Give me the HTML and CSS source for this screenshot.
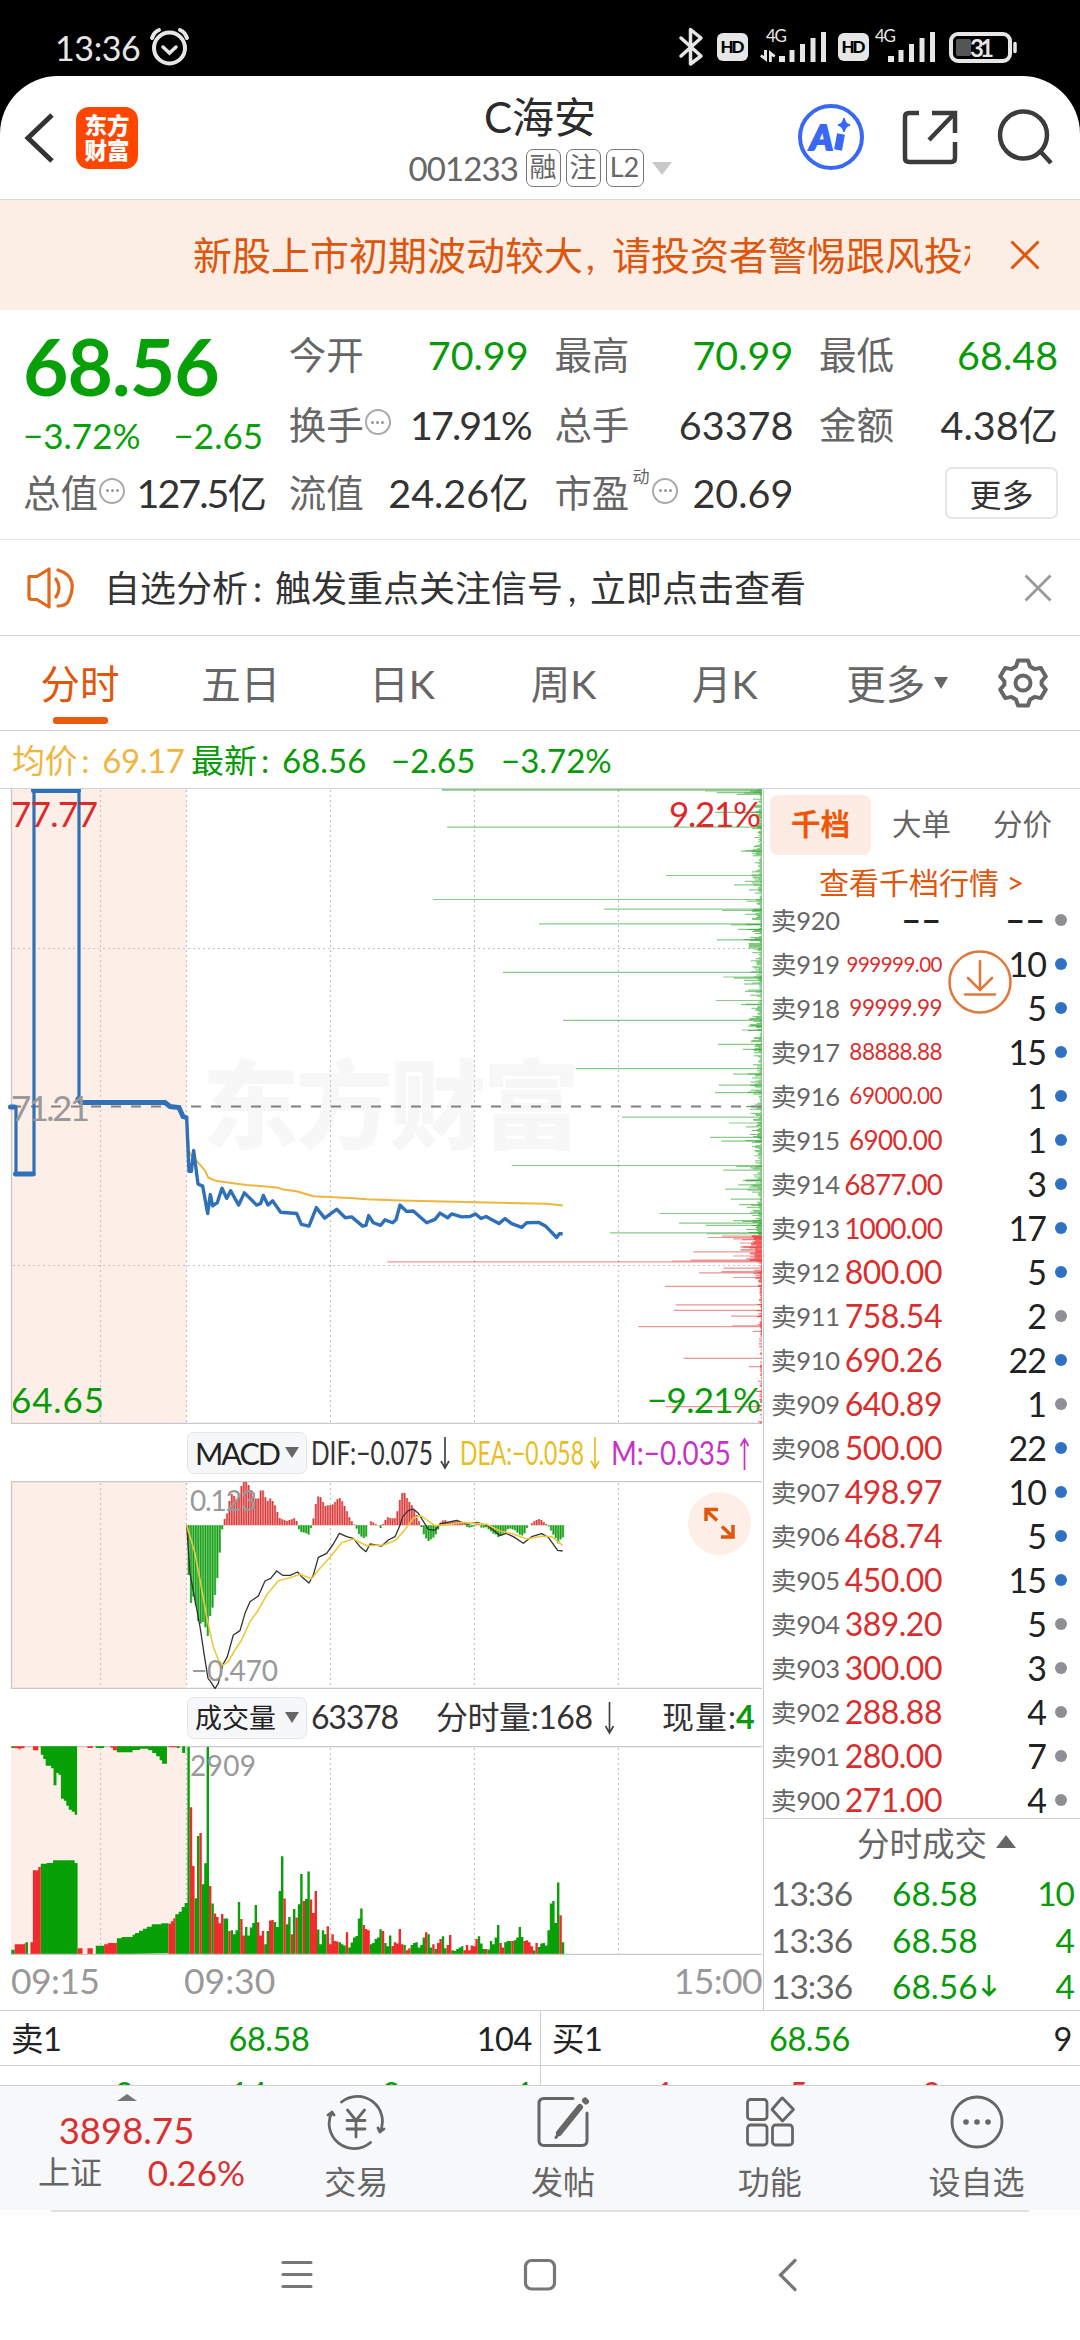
FILE: index.html
```html
<!DOCTYPE html>
<html lang="zh-CN">
<head>
<meta charset="utf-8">
<title>C海安 001233</title>
<link rel="stylesheet" href="styles.css">
</head>
<body>
<div class="phone">
  <div class="statusbar">
    <span class="clock">13:36</span>
    <svg class="status-icons" viewBox="142 0 938 76" width="938" height="76">
      <g fill="none" stroke="#e6e6e6" stroke-width="4" stroke-linecap="round">
        <circle cx="169.500" cy="48" r="15.500"/>
        <path d="M163 47l6.500 6 6.500-6" stroke-width="3.500"/>
        <path d="M152 38q2-6 7-8M187 38q-2-6-7-8" stroke-width="4"/>
        <path d="M681 38l20 18-10.500 8V29.500l10.500 8.500-20 18" stroke-width="3.500" stroke-linejoin="round"/>
        <rect x="951" y="34" width="59" height="27" rx="7"/>
        <path d="M1015 43.500v8" stroke-width="3.500"/>
      </g>
      <rect x="956" y="39" width="15" height="17" rx="2" fill="#555"/>
      <g fill="#e6e6e6">
        <rect x="717" y="33" width="31" height="28" rx="6"/>
        <rect x="838" y="33" width="31" height="28" rx="6"/>
        <path d="M779 56h6v6h-6zM789.500 50h5v12h-5zM800 44h5v18h-5zM810.500 38h5v24h-5zM821 32h5v30h-5z"/>
        <path d="M888 56h6v6h-6zM898.500 50h5v12h-5zM909 44h5v18h-5zM919.500 38h5v24h-5zM930 32h5v30h-5z"/>
        <path d="M764 50h3v12l-7-5.500 1.500-2 2.500 1.500zM769 62V50l6.500 5.500-1.500 2-2.200-1.500v6z"/>
        <text x="766" y="42" font-size="17" textLength="21">4G</text>
        <text x="875" y="42" font-size="17" textLength="21">4G</text>
        <text x="970" y="56.500" font-size="24" font-weight="700" textLength="24">31</text>
      </g>
      <g fill="#000" font-size="17" font-weight="900">
        <text x="720.500" y="53" textLength="24">HD</text>
        <text x="841.500" y="53" textLength="24">HD</text>
      </g>
    </svg>
  </div>

  <div class="screen">
    <header class="header">
      <div class="head-left">
        <svg width="30" height="54" viewBox="0 0 30 54" fill="none" stroke="#333" stroke-width="5"><path d="M28 4L4 27l24 23"/></svg>
        <div class="logo"><span>东方</span><span>财富</span></div>
      </div>
      <div class="head-title">
        <h1>C海安</h1>
        <div class="code"><span class="num">001233</span><i>融</i><i>注</i><i class="wide">L2</i><b></b></div>
      </div>
      <svg class="head-right" viewBox="790 77 290 122" width="290" height="122" fill="none" stroke="#3c3c3c" stroke-width="4.500">
        <circle cx="831" cy="138" r="31" stroke="#3a68f5" stroke-width="4"/>
        <text x="810" y="151" class="ai-text">A</text>
        <path d="M841 135l-3 16" stroke="#3a68f5" stroke-width="8"/>
        <path d="M844 119q1 6 6 7-5 1-6 7-1-6-6-7 5-1 6-7z" fill="#3a68f5" stroke="#3a68f5" stroke-width="1.500"/>
        <path d="M919 114h-10q-4 0-4 4v41q0 4 4 4h42q4 0 4-4v-16"/>
        <path d="M932 114h23v20M954 115l-25 26"/>
        <circle cx="1023.500" cy="136" r="23.500"/><path d="M1039 151l12 13"/>
      </svg>
    </header>

    <div class="banner">
      <p>新股上市初期波动较大<em>,</em>请投资者警惕跟风投机</p>
      <svg width="30" height="30" viewBox="0 0 30 30" fill="none" stroke="#e0570c" stroke-width="3"><path d="M1.500 1.500l27 27M28.500 1.500l-27 27"/></svg>
    </div>

    <section class="stats">
      <div class="price"><strong>68.56</strong><p><span>−3.72%</span><span>−2.65</span></p></div>
      <div class="cell"><label>今开</label><span class="down">70.99</span></div>
      <div class="cell"><label>最高</label><span class="down">70.99</span></div>
      <div class="cell"><label>最低</label><span class="down">68.48</span></div>
      <div class="cell"><label>换手</label><u><s></s></u><span class="tight">17.91%</span></div>
      <div class="cell"><label>总手</label><span>63378</span></div>
      <div class="cell"><label>金额</label><span>4.38亿</span></div>
      <div class="cell"><label>总值</label><u><s></s></u><span class="tight">127.5亿</span></div>
      <div class="cell"><label>流值</label><span>24.26亿</span></div>
      <div class="cell"><label>市盈</label><sup>动</sup><u><s></s></u><span>20.69</span></div>
      <div class="cell"><button>更多</button></div>
    </section>

    <div class="notice">
      <svg width="48" height="42" viewBox="0 0 48 42" fill="none" stroke="#e0691e" stroke-width="3.200" stroke-linejoin="round"><path d="M2 9.500h8L22 2v38L10 32.500H5q-3 0-3-3z"/><path d="M29 12q6 9 0 18M31 3q22 7 10 32-3 4-10 4" stroke-linecap="round"/></svg>
      <p>自选分析<em>:</em>触发重点关注信号<em>,</em>立即点击查看</p>
      <svg width="28" height="28" viewBox="0 0 28 28" fill="none" stroke="#999" stroke-width="2.800"><path d="M1.500 1.500l25 25M26.500 1.500l-25 25"/></svg>
    </div>

    <nav class="tabs">
      <a class="on">分时</a><a>五日</a><a>日K</a><a>周K</a><a>月K</a><a class="more">更多<b></b></a>
      <svg width="50" height="50" viewBox="-25 -25 50 50" fill="none" stroke="#666" stroke-width="4" stroke-linejoin="round"><path d="M-5-22.500h10l2 6 4.500 2.600 6.300-1.200 5 8.600-4.200 4.800v3.400l4.200 4.800-5 8.600-6.300-1.200L7 16.500l-2 6H-5l-2-6-4.500-2.600-6.300 1.200-5-8.600 4.200-4.800V-1.700l-4.200-4.800 5-8.600 6.300 1.200L-7-16.500z"/><circle r="7.500"/></svg>
    </nav>

    <div class="legend"><span class="avg">均价<em>:</em>69.17</span><span class="down">最新<em>:</em>68.56</span><span class="down">−2.65</span><span class="down">−3.72%</span></div>

    <main class="board">
      <div class="charts">
        <svg class="panel" viewBox="0 789 763 635" width="763" height="635">
          <rect x="11" y="789" width="175.500" height="635" fill="#fdeee7"/>
          <text class="mark" x="202" y="1141" textLength="378">东方财富</text>
          <g class="grid"><path d="M100.500 790v633M186.500 790v633M330.500 790v633M474.500 790v633M618.500 790v633M13 948.500h749M13 1265.500h749"/></g>
          <path class="frame" d="M11.500 789v634.500H762"/>
          <g id="depth"></g>
          <path d="M11 1106.500H762" stroke="#808080" stroke-width="2" stroke-dasharray="10 10"/>
          <g class="lines" transform="translate(0 780) scale(.33333 .42088)">
            <polyline stroke="#efb63f" stroke-width="2" points="560,802 567,880 575,895 590,905 615,928 625,945 650,953 700,958 740,962 830,968 850,973 890,977 940,989 1050,993 1100,996 1200,999 1427,1003 1640,1007 1688,1011"/>
            <polyline stroke="#2f70b7" stroke-width="3.400" points="560,802 567,930 574,930 581,880 594,960 608,965 623,1030 631,985 638,1012 652,1004 666,970 680,994 692,976 716,1010 733,981 755,998 770,1010 782,1006 790,987 804,1010 818,1000 842,1027 890,1030 904,1056 927,1060 949,1016 974,1041 1010,1020 1036,1040 1055,1038 1088,1060 1098,1058 1106,1035 1120,1052 1142,1058 1155,1045 1178,1052 1188,1045 1200,1010 1220,1025 1240,1024 1280,1052 1305,1044 1320,1029 1343,1040 1355,1031 1385,1038 1410,1037 1427,1031 1443,1042 1458,1037 1497,1054 1515,1042 1535,1054 1565,1063 1580,1052 1615,1051 1637,1060 1670,1087 1678,1078 1688,1078"/>
          </g>
          <path d="M10.500 1107H16V1174H34V790.500H79V1099" fill="none" stroke="#2f70b7" stroke-width="3.200"/>
          <path d="M10.500 1107h4M15.500 1174h17.500M33.500 790.500h45M78 1099l3 3.500h84l5 4 9 1 4 9 3 1" fill="none" stroke="#2f70b7" stroke-width="5" stroke-linecap="round"/>
          <g font-size="35">
            <text x="11" y="826.500" textLength="87" fill="#dc2a2a">77.77</text>
            <text x="11" y="1120.500" textLength="79" fill="#999">71.21</text>
            <text x="11" y="1413" textLength="93" fill="#089a08">64.65</text>
            <text x="669" y="826.500" textLength="92" fill="#dc2a2a">9.21%</text>
            <text x="647" y="1413" textLength="114" fill="#089a08">−9.21%</text>
          </g>
        </svg>

        <div class="indicator">
          <span class="pick latin">MACD<b></b></span>
          <svg width="453" height="57" viewBox="310 1424 453 57" font-size="32.500">
            <text x="311" y="1465" fill="#333" textLength="122" lengthAdjust="spacingAndGlyphs">DIF:−0.075</text>
            <text x="460" y="1465" fill="#e9bd22" textLength="124" lengthAdjust="spacingAndGlyphs">DEA:−0.058</text>
            <text x="611" y="1465" fill="#c632c6" textLength="120" lengthAdjust="spacingAndGlyphs">M:−0.035</text>
            <g fill="none" stroke-width="1.700"><path stroke="#444" d="M445 1437v31M441 1461l4 7 4-7"/><path stroke="#e9bd22" d="M595 1437v31M591 1461l4 7 4-7"/><path stroke="#c632c6" d="M744.500 1470v-31M740.500 1446l4-7 4 7"/></g>
          </svg>
        </div>

        <svg class="panel" viewBox="0 1481 763 208" width="763" height="208">
          <rect x="11" y="1482" width="175.500" height="207" fill="#fdeee7"/>
          <g class="grid"><path d="M100.500 1483v205M186.500 1483v205M330.500 1483v205M474.500 1483v205M618.500 1483v205"/></g>
          <path class="frame" d="M762 1481.500H11.500v207H762"/>
          <g id="macd"></g>
          <g class="lines" transform="translate(0 1420) scale(.33333)">
            <polyline stroke="#333" stroke-width="1.300" points="560,316 570,460 585,540 600,620 612,700 624,775 632,785 645,806 655,790 668,735 682,710 700,645 720,632 735,580 750,545 775,528 795,483 812,475 830,453 848,466 870,466 893,456 905,470 927,489 940,465 955,412 980,400 1000,372 1018,340 1040,350 1060,355 1080,380 1098,395 1110,372 1145,378 1165,360 1185,350 1200,316 1208,290 1225,272 1240,267 1255,280 1285,328 1305,331 1320,312 1370,301 1402,313 1430,307 1465,318 1500,347 1518,340 1540,350 1570,370 1595,350 1625,341 1645,352 1673,391 1688,393"/>
            <polyline stroke="#ecc93c" stroke-width="1.600" points="560,316 585,400 600,480 620,590 640,680 655,720 668,736 685,725 705,690 725,660 750,605 775,570 800,525 835,482 870,473 900,463 935,476 960,445 990,412 1025,368 1060,357 1100,377 1150,375 1185,362 1210,335 1240,295 1262,287 1305,317 1345,314 1385,307 1460,313 1500,333 1540,342 1580,357 1625,349 1655,350 1688,376"/>
          </g>
          <g font-size="28" fill="#999"><text x="190" y="1511" textLength="67">0.123</text><text x="191" y="1681" textLength="87">−0.470</text></g>
          <circle cx="719.500" cy="1523.500" r="31.500" fill="#fdeee7"/>
          <path d="M706 1521v-11.500h12M706 1510l11 10.500M733 1525v12h-12M733 1537l-11-10.500" fill="none" stroke="#e0570c" stroke-width="3.500"/>
        </svg>

        <div class="indicator">
          <span class="pick">成交量<b></b></span>
          <svg width="453" height="57" viewBox="310 1689 453 57" font-size="32" fill="#333">
            <text x="311" y="1729" textLength="88">63378</text>
            <text x="436" y="1729" textLength="157">分时量:168</text>
            <text x="662" y="1729" textLength="74">现量:</text>
            <text x="736" y="1729" fill="#089a08" font-weight="700" textLength="19">4</text>
            <path d="M609.500 1702v31M605.500 1726l4 7 4-7" fill="none" stroke="#444" stroke-width="1.700"/>
          </svg>
        </div>

        <svg class="panel" viewBox="0 1746 763 209" width="763" height="209">
          <rect x="11" y="1747" width="175.500" height="207" fill="#fdeee7"/>
          <g class="grid"><path d="M100.500 1748v206M186.500 1748v206M330.500 1748v206M474.500 1748v206M618.500 1748v206"/></g>
          <path class="frame" d="M762 1746.500H11.500"/>
          <g transform="translate(0 1690) scale(.49105 .33333)">
            <path fill="#07a007" d="M23 793v-14h7v14zM52 793v-36h5v36zM83 793v-272h12v-2h13v-8h44v8h6v274zM195 793v-26h17v26zM238 793v-48h10v-4h22v-7h5v-5h8v-7h8v-6h8v-6h10v-7h20v-3h14v90zM357 793v-120h7v-8h6v-14h6v-12h7v154zM23 169h7v5h-7zM83 169h74v205h-5v-9h-6v-6h-6v-12h-5v-15h-5v-6h-6v-72h-5v-5h-4v37h-6v-51h-5v-8h-11v-20h-5v-13h-5zM195 169h17v5h-17zM238 169h102v52h-10v-10h-5v-12h-7v-10h-8v-8h-8v-5h-17v4h-15v7h-32zM360 169h6v5h-6zM371 169h6v20h-6z"/>
            <path fill="#ef2b2b" d="M30 793v-30h20v-3h2v33zM62 793v-36h5v-216h11v-10h5v262zM158 793v-18h10v18zM178 793v-18h11v18zM212 793v-30h8v-4h18v34zM343 793v-92h5v-7h5v-9h4v108zM30 169h20v6h-8v3h-4v-3h-8zM67 169h11v12h-11zM178 169h11v5h-11zM225 169h13v12h-8v-8h-5zM343 169h17v3h-17z"/>
          </g>
          <g id="volume"></g>
          <path class="frame" d="M11 1954.500H762"/>
          <text x="190" y="1776" font-size="28" fill="#999" textLength="66">2909</text>
        </svg>
        <div class="times"><span>09:15</span><span>09:30</span><span>15:00</span></div>
      </div>

      <aside class="book">
        <div class="book-tabs"><a class="on">千档</a><a>大单</a><a>分价</a></div>
        <p class="book-link">查看千档行情 &gt;</p>
        <div class="levels">
          <div><label>卖920</label><span class="none">−−</span><b class="none">−−</b><i></i></div>
          <div><label>卖919</label><span class="s1">999999.00</span><b>10</b><i class="blue"></i></div>
          <div><label>卖918</label><span class="s2">99999.99</span><b>5</b><i class="blue"></i></div>
          <div><label>卖917</label><span class="s2">88888.88</span><b>15</b><i class="blue"></i></div>
          <div><label>卖916</label><span class="s2">69000.00</span><b>1</b><i class="blue"></i></div>
          <div><label>卖915</label><span class="s3">6900.00</span><b>1</b><i class="blue"></i></div>
          <div><label>卖914</label><span class="s4">6877.00</span><b>3</b><i class="blue"></i></div>
          <div><label>卖913</label><span class="s4">1000.00</span><b>17</b><i class="blue"></i></div>
          <div><label>卖912</label><span>800.00</span><b>5</b><i class="blue"></i></div>
          <div><label>卖911</label><span>758.54</span><b>2</b><i></i></div>
          <div><label>卖910</label><span>690.26</span><b>22</b><i class="blue"></i></div>
          <div><label>卖909</label><span>640.89</span><b>1</b><i></i></div>
          <div><label>卖908</label><span>500.00</span><b>22</b><i class="blue"></i></div>
          <div><label>卖907</label><span>498.97</span><b>10</b><i class="blue"></i></div>
          <div><label>卖906</label><span>468.74</span><b>5</b><i class="blue"></i></div>
          <div><label>卖905</label><span>450.00</span><b>15</b><i class="blue"></i></div>
          <div><label>卖904</label><span>389.20</span><b>5</b><i></i></div>
          <div><label>卖903</label><span>300.00</span><b>3</b><i></i></div>
          <div><label>卖902</label><span>288.88</span><b>4</b><i></i></div>
          <div><label>卖901</label><span>280.00</span><b>7</b><i></i></div>
          <div><label>卖900</label><span>271.00</span><b>4</b><i></i></div>
        </div>
        <svg class="jump" width="64" height="64" viewBox="0 0 64 64" fill="none" stroke="#e0793c" stroke-width="2.600" stroke-linecap="round"><circle cx="32" cy="32" r="30.500"/><path d="M32 11v29M20 28l12 12 12-12M17 44.500h30"/></svg>
        <div class="deals">
          <p class="deals-head">分时成交<b></b></p>
          <div><time>13:36</time><span>68.58</span><em>10</em></div>
          <div><time>13:36</time><span>68.58</span><em>4</em></div>
          <div><time>13:36</time><span>68.56<svg width="16" height="24" viewBox="0 0 16 24" fill="none" stroke="#089a08" stroke-width="2.600"><path d="M8 1v20M1.500 14.500L8 21l6.500-6.500"/></svg></span><em>4</em></div>
        </div>
      </aside>
    </main>

    <div class="quotes">
      <div><span>卖1</span><b>68.58</b><em>104</em></div>
      <div><span>买1</span><b>68.56</b><em>9</em></div>
    </div>
    <div class="queue">
      <div class="down"><span>2</span><span>14</span><span>2</span><span>1</span></div>
      <div class="up"><span>1</span><span>5</span><span>2</span><span></span></div>
    </div>

    <footer class="toolbar">
      <div class="index"><b></b><strong>3898.75</strong><p><span>上证</span><em>0.26%</em></p></div>
      <a><svg viewBox="-31 -28 62 56" fill="none" stroke="#666" stroke-width="2.800" stroke-linecap="round"><path d="M-14.500-20A25 25 0 0 1 24 10l4-3M24 10l-2-4M14.500 20.500A25 25 0 0 1-24-10l-4 3M-24-10l2 3"/><path d="M-8.500-12L0-1.500 8.500-12M0-1.500V15M-9-1.500H9M-9 7H9"/></svg>交易</a>
      <a><svg viewBox="-31 -28 62 56" fill="none" stroke="#666" stroke-width="3" stroke-linecap="round"><path d="M10-23.500h-29q-5 0-5 5v37q0 5 5 5h38q5 0 5-5V-9"/><path d="M22-21.500l1 1" stroke-width="6"/><path d="M17-15L-4 11" stroke-width="6"/><path d="M-4 11l-3 4.500"/></svg>发帖</a>
      <a><svg viewBox="-31 -28 62 56" fill="none" stroke="#666" stroke-width="2.800"><rect x="-22.500" y="-22.500" width="19.500" height="20" rx="3"/><rect x="-22.500" y="3" width="19.500" height="20" rx="3"/><rect x="2.500" y="3" width="20" height="20" rx="3"/><path d="M11-23l1.500-1 11 11.500-11 11.500L2-12.500z" stroke-linejoin="round"/></svg>功能</a>
      <a><svg viewBox="-31 -28 62 56" fill="none" stroke="#666" stroke-width="2.800"><circle r="25"/><g fill="#666" stroke="none"><circle cx="-11" r="2.800"/><circle r="2.800"/><circle cx="11" r="2.800"/></g></svg>设自选</a>
    </footer>
    <div class="sysnav">
      <hr>
      <svg width="540" height="40" viewBox="270 2254 540 40" fill="none" stroke="#777" stroke-width="3.200" stroke-linecap="round"><path d="M283 2262.500h28M283 2274.500h28M283 2286.500h28"/><rect x="525.500" y="2260.500" width="29" height="28.500" rx="6"/><path d="M795 2260.500l-14.500 14.500 14.500 14.500"/></svg>
    </div>
  </div>
</div>
<script src="charts.js"></script>
</body>
</html>
```

FILE: styles.css
```css
* { box-sizing: border-box; margin: 0; padding: 0; }
body { background: #000; }
.phone {
  width: 1080px; height: 2340px; overflow: hidden; background: #000;
  font-family: Lato, "Noto Sans CJK SC", sans-serif; color: #333;
}
svg { display: block; flex: none; }
em, i { font-style: normal; }
b { font-weight: 400; }
a { text-decoration: none; }
.down { color: #089a08; }
.up { color: #d93030; }

.statusbar { height: 76px; display: flex; align-items: center; padding-left: 55px; }
.clock { width: 87px; font-size: 34px; color: #e6e6e6; line-height: 57px; white-space: nowrap; padding-top: 19px; letter-spacing: -.4px; }

.screen { height: 2264px; background: #fff; border-radius: 58px 58px 0 0; overflow: hidden; display: flex; flex-direction: column; }
.screen > * { flex: none; }

.header { height: 124px; border-bottom: 1px solid #d6d6d6; display: grid; grid-template-columns: 290px 500px 290px; }
.head-left { display: flex; align-items: center; padding-left: 24px; gap: 22px; }
.logo {
  width: 62px; height: 62px; border-radius: 13px; background: #ff4600; color: #fff;
  display: flex; flex-direction: column; justify-content: center;
  font-size: 22.500px; font-weight: 800; line-height: 25px; text-align: center;
}
.head-title { display: flex; flex-direction: column; align-items: center; }
.head-title h1 { font-size: 42px; font-weight: 400; line-height: 50px; margin-top: 16px; color: #2b2b2b; }
.code { display: flex; align-items: center; margin-top: 6px; font-size: 33px; line-height: 40px; color: #666; gap: 5px; }
.code .num { width: 112px; letter-spacing: -.9px; }
.code i { width: 35px; height: 38px; border: 1.500px solid #777; border-radius: 7px; font-size: 27px; line-height: 34px; text-align: center; }
.code .wide { width: 38px; }
.code b { border: 10px solid transparent; border-top: 13px solid #c9c9c9; border-bottom: 0; margin-left: 3px; }
.ai-text { fill: #3a68f5; stroke: #3a68f5; stroke-width: 2px; font: italic 900 35px Lato, sans-serif; }

.banner { height: 110px; background: #fceee5; display: flex; align-items: center; padding-left: 193px; }
.banner p { width: 777px; overflow: hidden; white-space: nowrap; font-size: 39px; line-height: 60px; color: #dd560e; }
.banner em { display: inline-block; width: 29px; padding-left: 3px; }
.banner svg { margin-left: 40px; }

.stats {
  height: 230px; border-bottom: 1px solid #e6e6e6; padding: 13px 22px 0 23px;
  display: grid; grid-template-columns: 240px 240px 239px 239px; column-gap: 25.700px; grid-template-rows: 68.500px 68.500px 68px;
}
.price { grid-row: span 2; color: #08a008; }
.price strong { display: block; font-size: 78.500px; font-weight: 700; line-height: 86px; letter-spacing: -1px; }
.price p { display: flex; justify-content: space-between; font-size: 35px; line-height: 44px; margin-top: 4px; }
.cell { display: flex; align-items: center; font-size: 39.500px; line-height: 60px; white-space: nowrap; height: 66px; }
.cell:nth-child(-n+4) { height: 64px; }
.cell label { color: #666; font-size: 37.500px; }
.cell span { margin-left: auto; }
.cell .tight { letter-spacing: -2px; margin-right: -2px; }
.cell u { width: 26px; height: 26px; border: 2px solid #aaa; border-radius: 50%; margin: -5px 0 0 1px; display: flex; align-items: center; justify-content: center; text-decoration: none; }
.cell s { width: 3px; height: 3px; border-radius: 50%; background: #999; box-shadow: -5px 0 #999, 5px 0 #999; }
.cell sup { font-size: 17px; line-height: 20px; color: #666; align-self: flex-start; margin: 7px 2px 0 3px; }
.cell button { margin-left: auto; width: 113px; height: 52px; border: 2px solid #e6e6e8; border-radius: 7px; background: #fff; color: #333; font: 32px/46px "Noto Sans CJK SC", sans-serif; }

.notice { height: 96px; border-bottom: 1px solid #d4d4d4; display: flex; align-items: center; padding: 0 28px 0 27px; }
.notice p { font-size: 36px; line-height: 60px; margin-left: 29px; white-space: nowrap; }
.notice em { display: inline-block; width: 27px; padding-left: 5px; }
.notice svg:last-child { margin-left: auto; }

.tabs { height: 95px; border-bottom: 1px solid #d4d4d4; display: flex; align-items: center; font-size: 39.500px; color: #666; }
.tabs a { width: 161.400px; text-align: center; line-height: 95px; height: 94px; }
.tabs .on { width: 160px; color: #e0570c; position: relative; }
.tabs .on::after { content: ""; position: absolute; left: 53px; top: 81px; width: 55px; height: 7px; border-radius: 3px; background: #e85a0c; }
.tabs .more { width: 192.500px; padding-right: 9px; display: flex; align-items: center; justify-content: center; gap: 9px; }
.tabs .more b { border: 7px solid transparent; border-top: 12px solid #666; border-bottom: 0; }

.legend { height: 58px; border-bottom: 1px solid #d0d0d0; display: flex; align-items: center; font-size: 33px; line-height: 56px; padding-left: 12px; white-space: nowrap; }
.legend .avg { color: #efb63f; width: 179px; letter-spacing: -.4px; }
.legend em { display: inline-block; width: 25px; padding-left: 4px; }
.legend span:nth-child(2) { width: 200px; }
.legend span:nth-child(3) { width: 110px; }

.board { height: 1222px; border-bottom: 1px solid #d0d0d0; display: flex; }
.charts { width: 763px; }
.charts text { font-family: Lato, "Noto Sans CJK SC", sans-serif; }
.charts .mark { font: 900 97px "Noto Sans CJK SC", sans-serif; fill: #f7f7f7; }
.grid { fill: none; stroke: #c4c4c4; stroke-width: 1.200px; stroke-dasharray: 2 3; }
.frame { fill: none; stroke: #c8c8c8; stroke-width: 1.300px; }
.lines polyline { fill: none; vector-effect: non-scaling-stroke; stroke-linejoin: round; }
.indicator { height: 57px; display: flex; align-items: center; padding-left: 187px; }
.pick { width: 120px; height: 42px; margin-right: 3px; border: 1.500px solid #e4e6ea; border-radius: 7px; background: #f6f7f9; color: #222; display: flex; align-items: center; justify-content: space-between; padding: 0 7px; font-size: 27px; line-height: 36px; }
.pick.latin { font-size: 30.500px; letter-spacing: -2px; }
.pick b { border: 7px solid transparent; border-top: 11px solid #666; border-bottom: 0; }
.times { height: 55px; padding: 0 1px 5px 11px; display: flex; align-items: center; font-size: 35.500px; color: #999; }
.times span:first-child { letter-spacing: -.6px; width: 173px; }
.times span:nth-child(3) { margin-left: auto; letter-spacing: -.6px; }

.book { width: 317px; border-left: 1px solid #c8c8c8; position: relative; }
.book-tabs { display: flex; padding: 6px 0 0 6px; font-size: 29.500px; line-height: 58px; text-align: center; color: #666; }
.book-tabs a { width: 101px; height: 60px; }
.book-tabs .on { background: #fdece4; border-radius: 8px; color: #f0560a; font-weight: 700; }
.book-link { height: 54px; padding-left: 55px; font-size: 30px; line-height: 54px; color: #e0570c; }
.levels { height: 910px; border-bottom: 1px solid #d0d0d0; overflow: hidden; display: flex; flex-direction: column; justify-content: flex-start; }
.levels div { flex: none; height: 44px; display: flex; align-items: center; padding-left: 7px; line-height: 42px; white-space: nowrap; }
.levels div:first-child { margin-top: -11px; }
.levels label { width: 70px; font-size: 25.500px; color: #666; letter-spacing: -.3px; padding-bottom: 1px; }
.levels span { width: 101px; font-size: 32px; color: #d92e2e; display: flex; justify-content: flex-end; letter-spacing: -.5px; }
.levels .s1 { font-size: 20.500px; }
.levels .s2 { font-size: 22.500px; }
.levels .s3 { font-size: 26px; }
.levels .s4 { font-size: 28px; letter-spacing: -.9px; }
.levels b { width: 104px; font-size: 34px; text-align: right; color: #222; letter-spacing: -1px; }
.levels .none { font-size: 32px; font-weight: 700; color: #222; letter-spacing: 1.500px; }
.levels i { width: 12px; height: 12px; border-radius: 50%; background: #8e8e93; margin-left: 9px; }
.levels .blue { background: #2f72c2; }
.jump { position: absolute; left: 184px; top: 161px; }
.deals { padding: 1px 6px 0 7px; font-size: 33.500px; }
.deals-head { display: flex; align-items: center; padding-left: 86px; height: 50px; gap: 9px; font-size: 32.500px; line-height: 46px; padding-bottom: 2px; color: #666; }
.deals-head b { border: 10px solid transparent; border-bottom: 13px solid #666; border-top: 0; margin-top: -6px; }
.deals div { display: flex; align-items: center; height: 46.600px; line-height: 46px; color: #089a08; }
.deals time { width: 121px; color: #666; letter-spacing: -1px; }
.deals span { display: flex; align-items: center; gap: 3px; }
.deals em { margin-left: auto; letter-spacing: -1px; }

.quotes { height: 55px; display: grid; grid-template-columns: 540px 540px; border-bottom: 1px solid #d0d0d0; font-size: 32.500px; line-height: 56px; color: #222; }
.quotes div { display: grid; grid-template-columns: 1fr 1fr 1fr; padding: 0 8px 0 11px; letter-spacing: -.4px; height: 54px; }
.quotes div + div, .queue div + div { border-left: 1px solid #d0d0d0; }
.quotes b { color: #089a08; text-align: center; margin-left: -5px; }
.quotes em { text-align: right; }
.queue { height: 19px; display: grid; grid-template-columns: 540px 540px; overflow: hidden; font-size: 32px; line-height: 40px; }
.queue div { display: grid; grid-template-columns: repeat(4, 1fr); padding: 8px 6px 0 0; text-align: right; }

.toolbar { height: 125px; background: #f7f8fa; border-top: 1px solid #d0d0d0; display: flex; color: #666; }
.toolbar a { width: 206.800px; display: flex; flex-direction: column; align-items: center; font-size: 32px; line-height: 40px; padding-top: 8px; }
.toolbar a svg { width: 62px; height: 56px; margin-bottom: 12px; }
.index { width: 253px; display: flex; flex-direction: column; align-items: center; color: #d93030; }
.index b { border: 10px solid transparent; border-bottom: 7px solid #777; border-top: 0; margin-top: 8px; }
.index strong { font-size: 36.500px; font-weight: 400; line-height: 40px; margin-top: 9px; }
.index p { display: flex; width: 253px; padding: 0 8px 0 38px; justify-content: space-between; line-height: 44px; font-size: 35px; }
.index p span { color: #666; font-size: 32px; }
.sysnav { height: 130px; display: flex; flex-direction: column; align-items: center; background: #fefefe; }
.sysnav hr { width: 978px; height: 2px; border: 0; background: #e0e0e0; }
.sysnav svg { margin-top: 42px; }
```

FILE: charts.js
```js
const NS = 'http://www.w3.org/2000/svg';
function draw(id, d, color, width) {
  const p = document.createElementNS(NS, 'path');
  p.setAttribute('d', d);
  p.setAttribute('stroke', color);
  p.setAttribute('stroke-width', width);
  p.setAttribute('fill', 'none');
  document.getElementById(id).appendChild(p);
}

// Order book depth: [length * 3, y offset] pairs measured from the right edge
const asks = [[961,22],[961,24],[171,26],[136,30],[76,34],[141,77],[945,112],[63,169],[288,227],[51,241],[84,249],[39,261],[987,284],[473,307],[120,310],[669,342],[93,344],[72,355],[135,380],[39,391],[41,399],[777,457],[116,468],[84,471],[54,476],[51,502],[138,524],[63,534],[597,571],[42,585],[60,594],[132,628],[58,640],[559,686],[86,699],[130,725],[141,743],[48,776],[420,801],[99,815],[48,824],[156,849],[122,858],[751,916],[77,918],[116,927],[57,951],[71,962],[110,972],[94,996],[69,1009],[308,1030],[86,1047],[249,1053],[169,1058],[456,1076],[166,1078]];
const bids = [[119,1084],[163,1087],[86,1090],[66,1100],[56,1110],[206,1121],[86,1131],[214,1141],[270,1143],[1124,1145],[116,1160],[122,1168],[189,1171],[86,1182],[291,1203],[259,1247],[264,1260],[93,1274],[89,1297],[371,1299],[28,1310],[235,1374],[40,1394],[289,1489]];
const row = (len, y) => `M762 ${(780 + y / 2.376).toFixed(1)}h${(-len / 3).toFixed(1)}`;
let seed = 7;
const rnd = () => (seed = (seed * 1103515245 + 12345) % 2147483648) / 2147483648;
let greens = '', reds = '';
for (let y = 24; y < 1080; y += 2.4) {
  const near = asks.some(a => Math.abs(a[1] - y) < 10);
  greens += row(3 + rnd() * rnd() * (near ? 62 : 32), y);
}
for (let y = 1083; y < 1528; y += 2.4) {
  if (y > 1315 && y < 1525 && rnd() < 0.4) continue;
  const cap = y < 1145 ? 70 : y < 1185 ? 30 : 16;
  reds += row((y < 1145 ? 16 : 2) + rnd() * rnd() * cap, y);
}
draw('depth', greens, 'rgba(20,160,20,.62)', 1);
draw('depth', reds, 'rgba(240,40,40,.7)', 1.1);
draw('depth', asks.map(a => row(a[0], a[1])).join(''), 'rgba(20,150,20,.5)', 1.2);
draw('depth', bids.map(a => row(a[0], a[1])).join(''), 'rgba(215,45,45,.5)', 1.2);

// MACD histogram, one value per slot; positive is red
const macd = [-149,-233,-214,-241,-287,-295,-290,-306,-332,-272,-247,-209,-158,-82,-12,
19,35,73,94,88,78,88,118,130,130,121,106,88,80,80,104,104,84,73,80,73,60,40,22,18,15,13,16,18,21,13,
-12,-20,-22,-24,-28,-8,20,64,86,84,70,58,60,60,62,70,78,82,72,58,42,24,12,2,-10,-26,-34,-38,-34,0,
12,8,3,1,-8,4,16,24,22,20,22,42,76,97,97,82,70,60,46,31,12,-5,-27,-39,-47,-42,-37,-27,-13,
8,14,15,8,8,10,12,12,12,8,2,-5,-7,-5,-3,10,8,-7,-7,-6,-12,-18,-25,-28,-35,-32,-25,-20,-12,-10,
-12,-15,-22,-28,-30,-24,-8,0,6,12,16,19,16,10,4,-3,-16,-28,-38,-54,-42,-36];
const step = 2.4;
const column = (i, h, base) => `M${(188.6 + i * step).toFixed(1)} ${base}v${(-h / 3).toFixed(1)}`;
const pick = (data, sign, base, flip) => data.map((v, i) => v * sign > 0 ? column(i, flip ? v : Math.abs(v), base) : '').join('');
draw('macd', pick(macd, -1, 1525.3, true), '#6fd06f', 2.4);
draw('macd', pick(macd, 1, 1525.3, true), '#ff9a9a', 2.4);
draw('macd', pick(macd, -1, 1525.3, true), '#1f9a1f', 1.3);
draw('macd', pick(macd, 1, 1525.3, true), '#cf3f3f', 1.3);

// Minute volume; positive is red
const volume = [-622,441,265,-168,-355,364,-210,-273,-622,205,-152,122,112,93,121,-107,-107,70,-72,-60,-72,-157,106,56,-82,-56,-80,-94,-148,96,56,70,-30,-70,101,103,-97,-82,-190,-294,167,-90,-112,60,-136,110,-150,-241,160,-166,-248,164,124,190,-74,-30,-72,-60,84,30,60,40,38,-36,-30,-26,66,-20,-35,-50,-55,-107,-137,88,76,72,-30,-34,-46,-50,-75,70,-34,-24,-56,25,36,32,76,30,-28,12,18,-28,-34,-36,-20,-28,-50,66,-60,-20,30,-16,34,46,-54,-18,28,58,-12,-10,-16,-20,-24,12,28,12,26,24,46,-54,-32,-16,16,-14,-40,-30,-50,-88,34,20,-36,-40,-40,40,-42,-50,-82,-52,40,42,36,24,-12,34,-22,-32,-34,-26,-72,-152,-160,-94,-215,117,-36];
draw('volume', pick(volume, -1, 1954.3, false), '#07a007', 2.4);
draw('volume', pick(volume, 1, 1954.3, false), '#ef2b2b', 2.4);
```
